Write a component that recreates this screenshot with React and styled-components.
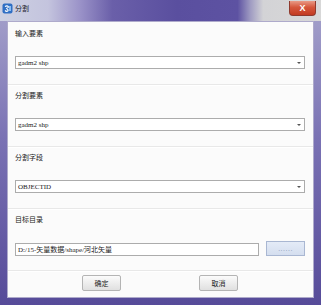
import React from "react";
import styled, { createGlobalStyle } from "styled-components";

const Global = createGlobalStyle`
  html, body {
    margin: 0;
    padding: 0;
    background: #ffffff;
  }
  * {
    box-sizing: border-box;
  }
`;

const Window = styled.div`
  width: 321px;
  height: 305px;
  display: flex;
  flex-direction: column;
  background: linear-gradient(180deg, #a7a4cc 0%, #7a72b4 45%, #564b99 100%);
  font-family: "Noto Sans CJK SC", "Liberation Serif", serif;
  overflow: hidden;
`;

const TitleBar = styled.div`
  height: 21px;
  display: flex;
  align-items: flex-start;
  padding: 3px 5px 0 2px;
  background: linear-gradient(
    90deg,
    #cdd1e2 0%,
    #c4c4de 15%,
    #9a92c8 25%,
    #6a5fa9 35%,
    #5a4f9f 55%,
    #5d52a2 74%,
    #9f9bc2 78%,
    #d3d3d6 82%,
    #d8d8d8 100%
  );
`;

const AppIcon = styled.svg`
  width: 11px;
  height: 11px;
  flex: none;
`;

const Title = styled.span`
  margin-left: 2px;
  font-size: 7px;
  line-height: 11px;
  color: #1c1c2a;
`;

const CloseButton = styled.div`
  margin-left: auto;
  width: 27px;
  height: 15px;
  margin-top: -2px;
  border-radius: 0 0 4px 4px;
  background: linear-gradient(180deg, #e99a86 0%, #d5573c 45%, #c23b22 100%);
  border: 1px solid #8f3a2e;
  border-top: none;
  color: #ffffff;
  font-family: "Liberation Sans", sans-serif;
  font-size: 9px;
  font-weight: bold;
  display: flex;
  align-items: center;
  justify-content: center;
`;

const Client = styled.div`
  flex: 1;
  margin: 0 7px 7px 7px;
  background: #fbfbfb;
  border: 1px solid #aeaacb;
  display: flex;
  flex-direction: column;
  padding: 1px 0 0 0;
`;

const Group = styled.div`
  height: 62px;
  display: flex;
  flex-direction: column;
  padding: 4px 8px 0 7px;
  border-bottom: 1px solid #e8e8e8;
  box-shadow: 0 1px 0 #ffffff;
`;

const Label = styled.div`
  font-size: 7px;
  line-height: 12px;
  color: #222222;
  margin-bottom: 17px;
`;

const Combo = styled.div`
  height: 13px;
  border: 1px solid #acacac;
  background: #ffffff;
  display: flex;
  align-items: center;
  padding: 0 3px 0 2px;
  font-family: "Liberation Serif", "Noto Sans CJK SC", serif;
  font-size: 7px;
  color: #222222;
`;

const Arrow = styled.span`
  margin-left: auto;
  width: 0;
  height: 0;
  border-left: 2px solid transparent;
  border-right: 2px solid transparent;
  border-top: 2px solid #555555;
`;

const PathRow = styled.div`
  display: flex;
  align-items: center;
  gap: 7px;
  margin-top: -1px;
`;

const TextBox = styled.div`
  flex: 1;
  height: 13px;
  margin-top: 1px;
  border: 1px solid #acacac;
  background: #ffffff;
  display: flex;
  align-items: center;
  padding: 0 2px;
  font-family: "Liberation Serif", "Noto Sans CJK SC", serif;
  font-size: 7px;
  color: #222222;
  white-space: nowrap;
`;

const BrowseButton = styled.div`
  width: 39px;
  height: 15px;
  border: 1px solid #a9b7d2;
  background: linear-gradient(180deg, #e4ebf7 0%, #d4deef 100%);
  color: #8593b2;
  font-family: "Liberation Sans", sans-serif;
  font-size: 7px;
  line-height: 7px;
  display: flex;
  align-items: center;
  justify-content: center;
  letter-spacing: 0.5px;
`;

const Footer = styled.div`
  flex: 1;
  display: flex;
  justify-content: flex-start;
  align-items: flex-start;
  padding: 4px 0 0 74px;
  gap: 78px;
`;

const Button = styled.div`
  width: 39px;
  height: 16px;
  border: 1px solid #b4b4b4;
  border-radius: 2px;
  background: linear-gradient(180deg, #fbfbfb 0%, #ececec 55%, #e0e0e0 100%);
  font-size: 7px;
  color: #222222;
  display: flex;
  align-items: center;
  justify-content: center;
`;

const sections = [
  { label: "输入要素", value: "gadm2 shp" },
  { label: "分割要素", value: "gadm2 shp" },
  { label: "分割字段", value: "OBJECTID" },
];

export default function App() {
  return (
    <>
      <Global />
      <Window>
        <TitleBar>
          <AppIcon viewBox="0 0 11 11">
            <rect x="0.5" y="0.5" width="10" height="10" rx="2" fill="#2f6fc4" />
            <path d="M3 3.5 Q5.5 2 6.5 4 Q5.5 5.5 4 5.5 Q6.5 6 6 7.8 Q4.5 9 3 7.5" stroke="#ffffff" strokeWidth="1.1" fill="none" />
            <rect x="7.2" y="3" width="1.6" height="5" fill="#9fd0ff" />
          </AppIcon>
          <Title>分割</Title>
          <CloseButton>X</CloseButton>
        </TitleBar>
        <Client>
          {sections.map((s) => (
            <Group key={s.label}>
              <Label>{s.label}</Label>
              <Combo>
                {s.value}
                <Arrow />
              </Combo>
            </Group>
          ))}
          <Group>
            <Label>目标目录</Label>
            <PathRow>
              <TextBox>D:/15-矢量数据/shape/河北矢量</TextBox>
              <BrowseButton>......</BrowseButton>
            </PathRow>
          </Group>
          <Footer>
            <Button>确定</Button>
            <Button>取消</Button>
          </Footer>
        </Client>
      </Window>
    </>
  );
}
